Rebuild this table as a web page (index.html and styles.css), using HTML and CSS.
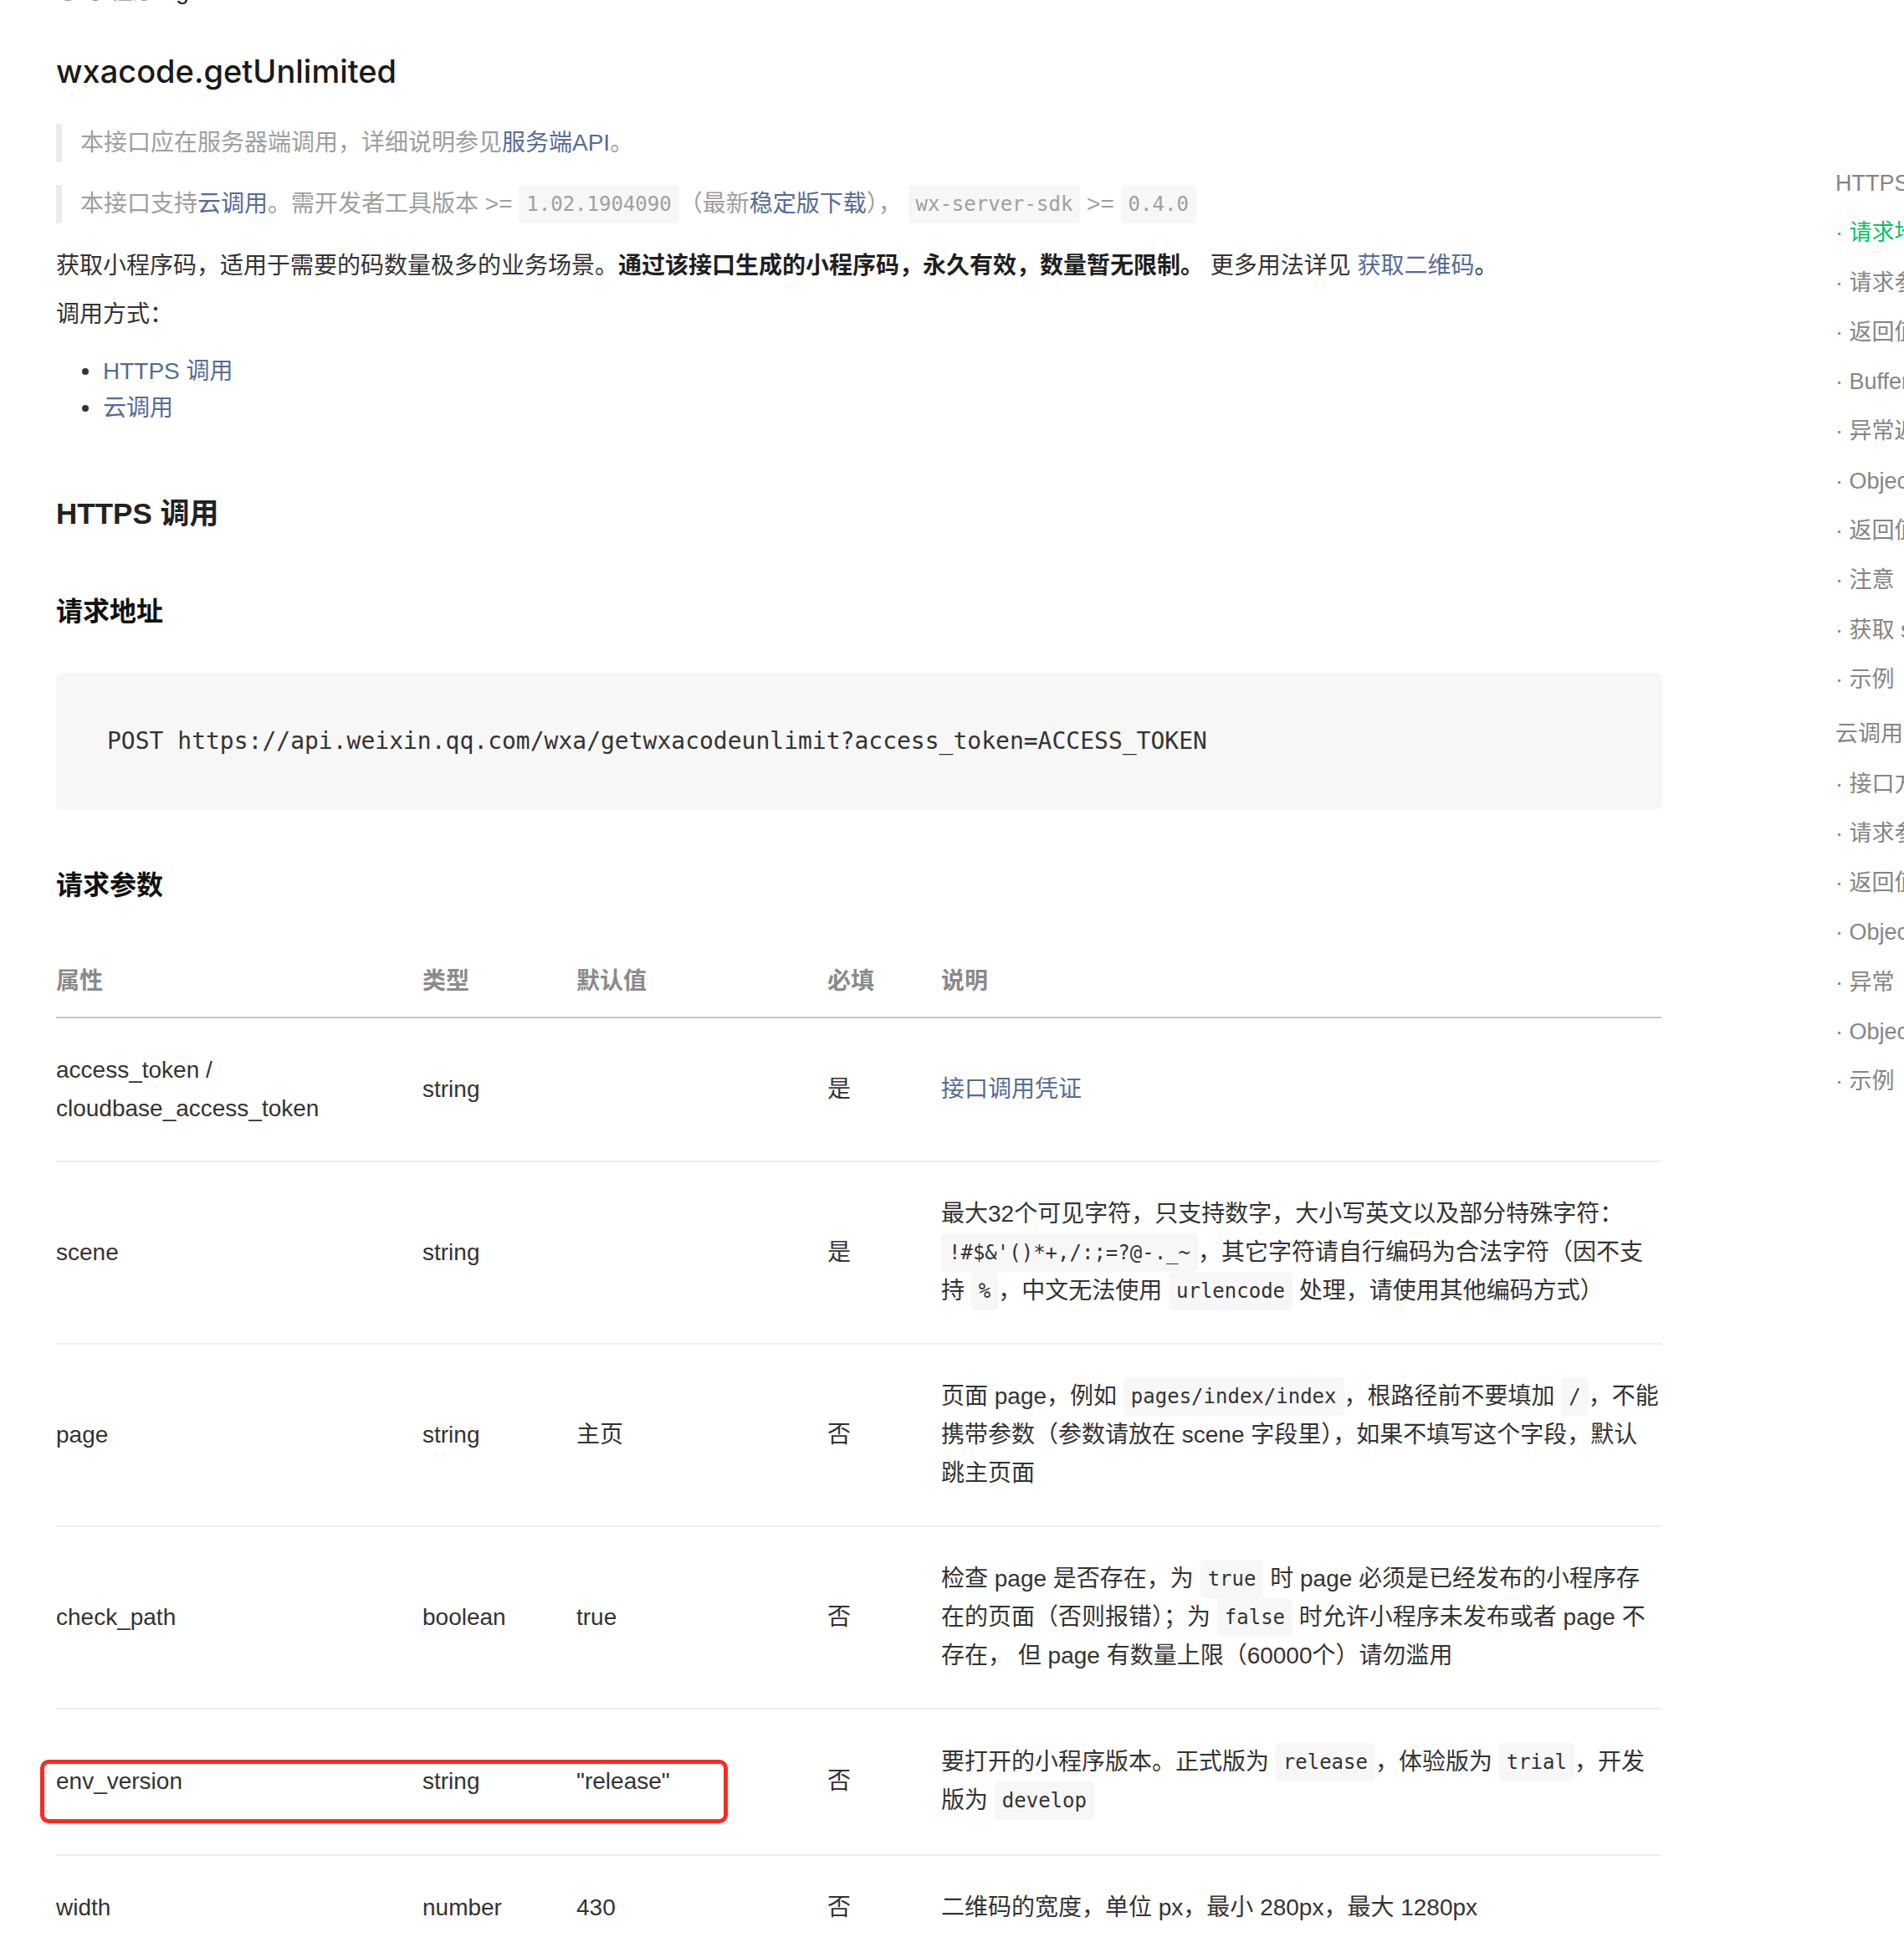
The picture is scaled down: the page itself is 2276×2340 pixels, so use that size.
FILE: index.html
```html
<!DOCTYPE html>
<html lang="zh-CN">
<head>
<meta charset="utf-8">
<title>wxacode.getUnlimited</title>
<link rel="stylesheet" href="styles.css">
</head>
<body>
<div class="page">
  <main class="main">
    <div class="crumb"><span class="crumb-muted">◎ 小程序 / </span><span class="crumb-cur">getUnlimited</span></div>
    <h1 class="title">wxacode.getUnlimited</h1>

    <blockquote class="note note-first">本接口应在服务器端调用，详细说明参见<a class="link" href="#">服务端API</a>。</blockquote>
    <blockquote class="note note-second">本接口支持<a class="link" href="#">云调用</a>。需开发者工具版本 &gt;= <code class="ic">1.02.1904090</code>（最新<a class="link" href="#">稳定版下载</a>）， <code class="ic">wx-server-sdk</code> &gt;= <code class="ic">0.4.0</code></blockquote>

    <p class="para para-intro">获取小程序码，适用于需要的码数量极多的业务场景。<strong>通过该接口生成的小程序码，永久有效，数量暂无限制。</strong> 更多用法详见 <a class="link" href="#">获取二维码</a>。</p>
    <p class="para para-way">调用方式：</p>
    <ul class="ways">
      <li><a class="link" href="#">HTTPS 调用</a></li>
      <li><a class="link" href="#">云调用</a></li>
    </ul>

    <h2 class="h2">HTTPS 调用</h2>
    <h3 class="h3 h3-first">请求地址</h3>
    <pre class="codeblock">POST https://api.weixin.qq.com/wxa/getwxacodeunlimit?access_token=ACCESS_TOKEN</pre>

    <h3 class="h3 h3-second">请求参数</h3>
    <table class="params">
      <colgroup>
        <col class="c1"><col class="c2"><col class="c3"><col class="c4"><col class="c5">
      </colgroup>
      <thead>
        <tr><th>属性</th><th>类型</th><th>默认值</th><th>必填</th><th>说明</th></tr>
      </thead>
      <tbody>
        <tr>
          <td>access_token /<br>cloudbase_access_token</td>
          <td>string</td>
          <td></td>
          <td>是</td>
          <td class="desc"><a class="link" href="#">接口调用凭证</a></td>
        </tr>
        <tr>
          <td>scene</td>
          <td>string</td>
          <td></td>
          <td>是</td>
          <td class="desc">最大32个可见字符，只支持数字，大小写英文以及部分特殊字符：<br><code class="ic">!#$&amp;'()*+,/:;=?@-._~</code>，其它字符请自行编码为合法字符（因不支<br>持 <code class="ic">%</code>，中文无法使用 <code class="ic">urlencode</code> 处理，请使用其他编码方式）</td>
        </tr>
        <tr>
          <td>page</td>
          <td>string</td>
          <td>主页</td>
          <td>否</td>
          <td class="desc">页面 page，例如 <code class="ic">pages/index/index</code>，根路径前不要填加 <code class="ic">/</code>，不能<br>携带参数（参数请放在 scene 字段里），如果不填写这个字段，默认<br>跳主页面</td>
        </tr>
        <tr>
          <td>check_path</td>
          <td>boolean</td>
          <td>true</td>
          <td>否</td>
          <td class="desc">检查 page 是否存在，为 <code class="ic">true</code> 时 page 必须是已经发布的小程序存<br>在的页面（否则报错）；为 <code class="ic">false</code> 时允许小程序未发布或者 page 不<br>存在， 但 page 有数量上限（60000个）请勿滥用</td>
        </tr>
        <tr class="row-tall">
          <td class="marked">env_version<span class="highlight" aria-hidden="true"></span></td>
          <td>string</td>
          <td>"release"</td>
          <td>否</td>
          <td class="desc">要打开的小程序版本。正式版为 <code class="ic">release</code>，体验版为 <code class="ic">trial</code>，开发<br>版为 <code class="ic">develop</code></td>
        </tr>
        <tr>
          <td>width</td>
          <td>number</td>
          <td>430</td>
          <td>否</td>
          <td class="desc">二维码的宽度，单位 px，最小 280px，最大 1280px</td>
        </tr>
      </tbody>
    </table>
  </main>

  <nav class="toc">
    <div class="toc-head">HTTPS 调用</div>
    <div class="toc-item active">· 请求地址</div>
    <div class="toc-item">· 请求参数</div>
    <div class="toc-item">· 返回值</div>
    <div class="toc-item">· Buffer</div>
    <div class="toc-item">· 异常返回</div>
    <div class="toc-item">· Object</div>
    <div class="toc-item">· 返回值说明</div>
    <div class="toc-item">· 注意</div>
    <div class="toc-item">· 获取 scene 值</div>
    <div class="toc-item">· 示例</div>
    <div class="toc-head toc-head-2">云调用</div>
    <div class="toc-item">· 接口方法</div>
    <div class="toc-item">· 请求参数</div>
    <div class="toc-item">· 返回值</div>
    <div class="toc-item">· Object</div>
    <div class="toc-item">· 异常</div>
    <div class="toc-item">· Object</div>
    <div class="toc-item">· 示例</div>
  </nav>
</div>
</body>
</html>
```

FILE: styles.css
```css
html, body {
  margin: 0;
  padding: 0;
  background: #ffffff;
}

body {
  font-family: "Liberation Sans", "Noto Sans CJK SC", sans-serif;
  font-size: 28px;
  line-height: 46px;
  color: #333333;
  overflow: hidden;
}

.page {
  display: flex;
  width: 2276px;
  overflow: hidden;
}

.main {
  flex: none;
  width: 1920px;
  padding-left: 67px;
}

.link {
  color: #576b95;
  text-decoration: none;
}

.crumb {
  height: 46px;
  margin-top: -33px;
  white-space: nowrap;
}

.crumb-muted {
  color: #9a9a9a;
}

.crumb-cur {
  color: #222222;
}

.title {
  margin: 45px 0 0;
  font-family: "Inter", "Liberation Sans", "Noto Sans CJK SC", sans-serif;
  font-size: 38px;
  line-height: 54px;
  font-weight: 500;
  color: #1a1a1a;
}

.note {
  margin: 0;
  padding-left: 22px;
  border-left: 7px solid #ececec;
  color: #9e9e9e;
  line-height: 46px;
  white-space: nowrap;
}

.note-first {
  margin-top: 36px;
}

.note-second {
  margin-top: 27px;
}

.note .ic {
  color: #a0a0a0;
}

.ic {
  display: inline-block;
  font-family: "DejaVu Sans Mono", monospace;
  font-size: 24px;
  line-height: 46px;
  padding: 0 9px;
  background: #f7f7f7;
  border-radius: 5px;
  vertical-align: top;
  color: #333333;
}

.para {
  margin: 0;
}

.para-intro {
  margin-top: 28px;
  white-space: nowrap;
}

.para-intro strong {
  font-weight: 700;
  color: #1f1f1f;
}

.para-way {
  margin-top: 12px;
}

.ways {
  list-style: none;
  margin: 23px 0 0;
  padding: 0;
}

.ways li {
  display: flex;
  align-items: center;
  gap: 17px;
  padding-left: 31px;
  line-height: 44px;
}

.ways li::before {
  content: "";
  flex: none;
  width: 8px;
  height: 8px;
  border-radius: 50%;
  background: #333333;
}

.h2 {
  margin: 79px 0 0;
  font-size: 35px;
  line-height: 50px;
  font-weight: 700;
  color: #222222;
}

.h3 {
  margin: 0;
  font-size: 32px;
  line-height: 46px;
  font-weight: 700;
  color: #111111;
}

.h3-first {
  margin-top: 69px;
}

.h3-second {
  margin-top: 67px;
}

.codeblock {
  margin: 50px 0 0;
  padding: 59px 61px;
  background: #f7f7f7;
  border-radius: 8px;
  font-family: "DejaVu Sans Mono", monospace;
  font-size: 28px;
  line-height: 46px;
  color: #333333;
  white-space: pre;
}

.params {
  margin-top: 50px;
  width: 1919px;
  table-layout: fixed;
  border-collapse: collapse;
  border-spacing: 0;
}

.c1 { width: 438px; }
.c2 { width: 184px; }
.c3 { width: 300px; }
.c4 { width: 136px; }
.c5 { width: 861px; }

.params th {
  text-align: left;
  font-weight: 700;
  color: #8a8a8a;
  padding: 19px 0 19px;
  border-bottom: 2px solid #c4c4c4;
}

.params td {
  padding: 39px 0;
  border-bottom: 2px solid #efefef;
  vertical-align: middle;
  color: #333333;
}

.params .row-tall td {
  padding: 40px 0 41px;
}

.params td.desc {
  white-space: nowrap;
}

.marked {
  position: relative;
}

.highlight {
  position: absolute;
  left: -19px;
  top: 60px;
  width: 822px;
  height: 76px;
  box-sizing: border-box;
  border: 5px solid #fb2a1f;
  border-radius: 10px;
}

.toc {
  flex: none;
  margin-left: 207px;
  padding-top: 190px;
  white-space: nowrap;
  font-size: 27px;
  line-height: 59.3px;
  color: #858585;
}

.toc-head-2 {
  margin-top: 6px;
}

.toc-item.active {
  color: #07c160;
}
```
